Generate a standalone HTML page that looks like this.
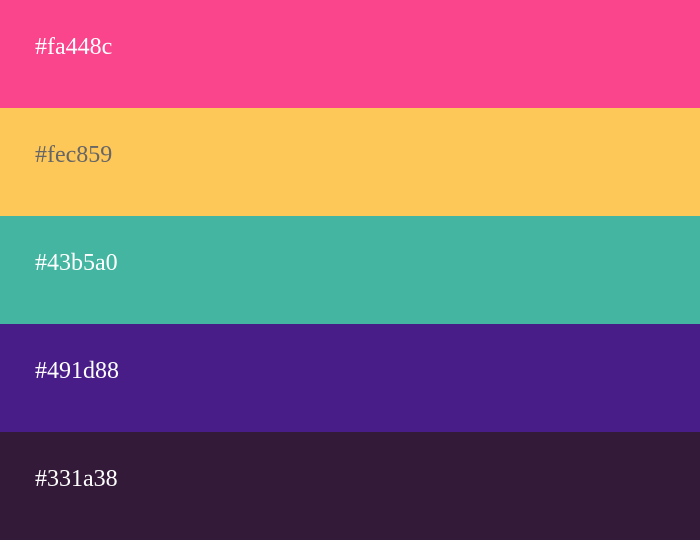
<!DOCTYPE html>
<html><head><style>
html,body{margin:0;padding:0;width:700px;height:540px;overflow:hidden}
div{height:108px;box-sizing:border-box;padding-left:35px;font-family:"Liberation Serif",serif;font-size:24px;line-height:95px;color:#fff}
</style></head><body>
<div style="background:#fa448c">#fa448c</div>
<div style="background:#fec859;color:#666">#fec859</div>
<div style="background:#43b5a0">#43b5a0</div>
<div style="background:#491d88">#491d88</div>
<div style="background:#331a38">#331a38</div>
</body></html>
